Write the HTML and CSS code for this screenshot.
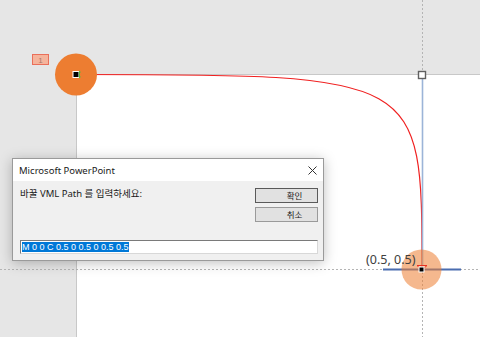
FILE: index.html
```html
<!DOCTYPE html>
<html lang="ko">
<head>
    <meta charset="UTF-8">
    <title>VML Path</title>
    <link rel="stylesheet" href="styles.css">
</head>
<body>
    <div class="workspace">
        <!-- slide, curve and handles -->
        <svg class="drawing" width="480" height="337" viewBox="0 0 480 337">
            <rect x="76.5" y="74.5" width="420" height="280" fill="#fff" stroke="#c8c8c8"/>
            <line x1="0" y1="269.5" x2="480" y2="269.5" stroke="#b4b4b4" stroke-dasharray="2 2"/>
            <line x1="422.5" y1="0" x2="422.5" y2="337" stroke="#b4b4b4" stroke-dasharray="2 2"/>
            <line x1="383" y1="269.5" x2="461" y2="269.5" stroke="#4a6db0" stroke-width="2"/>
            <path d="M76 74.5 C422 74.5 422 74.5 422 268" fill="none" stroke="#f02020" stroke-width="1.2"/>
            <line x1="422.5" y1="78" x2="422.5" y2="268" stroke="#9cb4d8" stroke-width="1.6"/>
            <circle cx="76" cy="74.5" r="21" fill="#ed7d31"/>
            <circle cx="421.5" cy="269.5" r="20" fill="#ed7d31" fill-opacity="0.55"/>
            <rect x="418.5" y="71.5" width="7" height="7" fill="#fff" stroke="#606060" stroke-width="1.4"/>
            <!-- start point -->
            <rect x="73" y="71.5" width="6" height="6" fill="#000" stroke="#fff" stroke-width="1"/>
            <path d="M79.5 70.5 L81 72.5 L80 72.5 L80 76.5 L81 76.5 L79.5 78.5 L78.5 76.5 L79 76.5 L79 72.5 L78.5 72.5 Z" fill="#5cb83c"/>
            <!-- end point -->
            <path d="M417 265.5 L427 265.5 L422 270 Z" fill="none" stroke="#e83020" stroke-width="1"/>
            <rect x="419" y="267" width="5" height="5" fill="#000" stroke="#fff" stroke-width="1"/>
            <!-- labels -->
            <rect x="32.5" y="54.5" width="16" height="10" fill="#f5b49c" stroke="#ea6f5a"/>
            <text x="40.5" y="62.5" class="num">1</text>
            <text x="366" y="264" class="coord">(0.5, 0.5)</text>
        </svg>

        <div class="dialog">
            <div class="dialog-title">
                <span>Microsoft PowerPoint</span>
                <svg class="close" width="9" height="9" viewBox="0 0 9 9">
                    <path d="M0.5 0.5 L8.5 8.5 M8.5 0.5 L0.5 8.5" stroke="#333" stroke-width="1"/>
                </svg>
            </div>
            <div class="dialog-body">
                <div class="dialog-main">
                    <div class="prompt">바꿀 VML Path 를 입력하세요:</div>
                    <div class="buttons">
                        <button class="btn default">확인</button>
                        <button class="btn">취소</button>
                    </div>
                </div>
                <div class="path-input"><span class="selected">M 0 0 C 0.5 0 0.5 0 0.5 0.5</span></div>
            </div>
        </div>
    </div>
</body>
</html>
```

FILE: styles.css
```css
body {
    margin: 0;
    font-family: "Noto Sans", "Noto Sans CJK KR", sans-serif;
    overflow: hidden;
}
.workspace {
    position: relative;
    width: 480px;
    height: 337px;
    background-color: #e6e6e6;
    overflow: hidden;
}
.drawing {
    position: absolute;
    left: 0;
    top: 0;
}
.num {
    font-family: "Liberation Sans", sans-serif;
    font-size: 8px;
    fill: #a8786a;
    text-anchor: middle;
}
.coord {
    font-family: "Noto Sans", sans-serif;
    font-size: 12.5px;
    fill: #404040;
}
.dialog {
    position: absolute;
    left: 12px;
    top: 158px;
    width: 310px;
    height: 101px;
    border: 1px solid #9a9a9a;
    background-color: #f0f0f0;
    box-shadow: 0 2px 12px rgba(0, 0, 0, 0.25);
    display: flex;
    flex-direction: column;
}
.dialog-title {
    height: 22px;
    background-color: #fff;
    display: flex;
    align-items: center;
    justify-content: space-between;
    padding: 0 5px 0 6px;
    font-size: 9.5px;
    color: #1a1a1a;
}
.close {
    margin-right: 1px;
}
.dialog-body {
    flex: 1;
    display: flex;
    flex-direction: column;
    justify-content: space-between;
    padding: 7px 5px 6px 7px;
}
.dialog-main {
    display: flex;
    justify-content: space-between;
}
.prompt {
    font-size: 9.5px;
    color: #1a1a1a;
    line-height: 12px;
}
.buttons {
    display: flex;
    flex-direction: column;
    gap: 4px;
}
.btn {
    width: 63px;
    height: 15px;
    padding: 0 0 0 16px;
    border: 1px solid #9a9a9a;
    background-color: #e1e1e1;
    font-family: "Noto Sans CJK KR", sans-serif;
    font-size: 8.5px;
    line-height: 13px;
    color: #1a1a1a;
}
.btn.default {
    border-color: #5a5a5a;
}
.path-input {
    height: 12px;
    border: 1px solid #7a7a7a;
    border-right-color: #d8d8d8;
    border-bottom-color: #d8d8d8;
    background-color: #fff;
    padding: 0 1px;
    display: flex;
    align-items: center;
}
.selected {
    background-color: #0078d7;
    color: #fff;
    font-family: "Liberation Sans", sans-serif;
    font-size: 9px;
    line-height: 10px;
}
```
